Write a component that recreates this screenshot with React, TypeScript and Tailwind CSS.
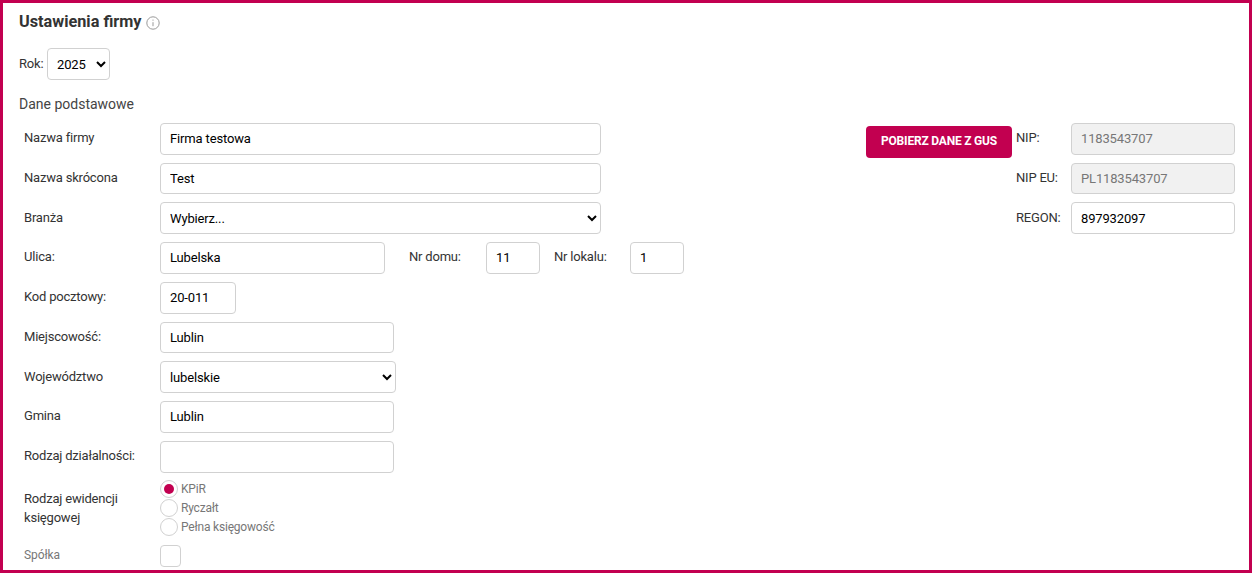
const inputCls =
  "h-[31.75px] rounded-[4px] border border-[#d1d1d1] bg-white px-[9px] text-[13px] tracking-[-0.15px] text-black outline-none";
const labelCls = "text-[13px] tracking-[-0.2px] text-[#333333]";

function Row({
  label,
  children,
}: {
  label: string;
  children: React.ReactNode;
}) {
  return (
    <div className="flex h-[31.75px] items-start">
      <div className={`w-[136px] pt-[5.4px] ${labelCls}`}>{label}</div>
      {children}
    </div>
  );
}

function Radio({ label, checked }: { label: string; checked?: boolean }) {
  return (
    <label className="flex h-[19px] items-center">
      <span className="flex h-[18px] w-[18px] items-center justify-center rounded-full border border-[#d1d1d1] bg-white">
        {checked && <span className="h-[10px] w-[10px] rounded-full bg-[#c20050]" />}
      </span>
      <span className="ml-[3px] text-[12px] tracking-[-0.2px] text-[#777777]">{label}</span>
    </label>
  );
}

export default function App() {
  return (
    <div
      className="h-[573px] w-[1252px] overflow-hidden border-[3px] border-[#c20050] bg-white"
      style={{ fontFamily: "Roboto, sans-serif" }}
    >
      <div className="flex items-center pl-[16px] pt-[8px]">
        <h1 className="text-[16.25px] font-bold leading-[22px] text-[#333333]">Ustawienia firmy</h1>
        <svg className="ml-[4px] mt-[1px] h-[14px] w-[14px] text-[#999999]" viewBox="0 0 14 14" fill="none" stroke="currentColor">
          <circle cx="7" cy="7" r="6.2" strokeWidth="1" />
          <path d="M7 6.2v4" strokeWidth="1" />
          <path d="M7 3.6v1.1" strokeWidth="1" />
        </svg>
      </div>

      <div className="mt-[15px] flex items-start pl-[16px]">
        <span className={`mt-[6px] w-[28px] ${labelCls}`}>Rok:</span>
        <select defaultValue="2025" className="h-[32px] w-[63px] rounded-[4px] border border-[#d1d1d1] bg-white pl-[5px] text-[13px] tracking-[-0.15px] text-black outline-none">
          <option>2025</option>
        </select>
      </div>

      <div className="mt-[14px] pl-[16px] text-[14px] leading-[20px] text-[#444444]">Dane podstawowe</div>

      <div className="mt-[8.8px] flex pl-[21px]">
        <div className="flex w-[842px] flex-col gap-[8px]">
          <Row label="Nazwa firmy">
            <input readOnly value="Firma testowa" className={`${inputCls} w-[441px]`} />
          </Row>
          <Row label="Nazwa skrócona">
            <input readOnly value="Test" className={`${inputCls} w-[441px]`} />
          </Row>
          <Row label="Branża">
            <select className={`${inputCls} w-[441px] !px-[5px]`}>
              <option>Wybierz...</option>
            </select>
          </Row>
          <Row label="Ulica:">
            <input readOnly value="Lubelska" className={`${inputCls} w-[225px]`} />
            <span className={`ml-[24px] w-[77px] pt-[5.4px] ${labelCls}`}>Nr domu:</span>
            <input readOnly value="11" className={`${inputCls} w-[54px]`} />
            <span className={`ml-[14px] w-[76px] pt-[5.4px] ${labelCls}`}>Nr lokalu:</span>
            <input readOnly value="1" className={`${inputCls} w-[54px]`} />
          </Row>
          <Row label="Kod pocztowy:">
            <input readOnly value="20-011" className={`${inputCls} w-[76px]`} />
          </Row>
          <Row label="Miejscowość:">
            <input readOnly value="Lublin" className={`${inputCls} w-[234px]`} />
          </Row>
          <Row label="Województwo">
            <select className={`${inputCls} w-[236px] !px-[5px]`}>
              <option>lubelskie</option>
            </select>
          </Row>
          <Row label="Gmina">
            <input readOnly value="Lublin" className={`${inputCls} w-[234px]`} />
          </Row>
          <Row label="Rodzaj działalności:">
            <input readOnly value="" className={`${inputCls} w-[234px]`} />
          </Row>
          <div className="-mt-[0.8px] flex items-start">
            <div className="w-[136px] pt-[9px] text-[13px] leading-[19.6px] tracking-[-0.2px] text-[#333333]">
              Rodzaj ewidencji
              <br />
              księgowej
            </div>
            <div className="flex flex-col">
              <Radio label="KPiR" checked />
              <Radio label="Ryczałt" />
              <Radio label="Pełna księgowość" />
            </div>
          </div>
          <div className="flex items-start">
            <div className="w-[136px] pt-[1px] text-[12px] tracking-[-0.1px] text-[#777777]">Spółka</div>
            <span className="h-[22px] w-[21px] rounded-[4px] border border-[#d1d1d1] bg-white" />
          </div>
        </div>

        <div className="flex items-start">
          <button className="mt-[3px] h-[32px] w-[146px] rounded-[4px] bg-[#c20050] pb-[1px] text-[12px] font-bold tracking-[-0.2px] text-white">
            POBIERZ DANE Z GUS
          </button>
          <div className="ml-[4px] flex flex-col gap-[8px]">
            {[
              { label: "NIP:", value: "1183543707", off: true },
              { label: "NIP EU:", value: "PL1183543707", off: true },
              { label: "REGON:", value: "897932097", off: false },
            ].map((f) => (
              <div key={f.label} className="flex h-[31.75px] items-start">
                <span className={`w-[55px] pt-[5.4px] ${labelCls}`}>{f.label}</span>
                <input
                  readOnly
                  value={f.value}
                  className={`${inputCls} w-[164px] ${f.off ? "!bg-[#f1f1f1] !text-[#777777]" : ""}`}
                />
              </div>
            ))}
          </div>
        </div>
      </div>
    </div>
  );
}
